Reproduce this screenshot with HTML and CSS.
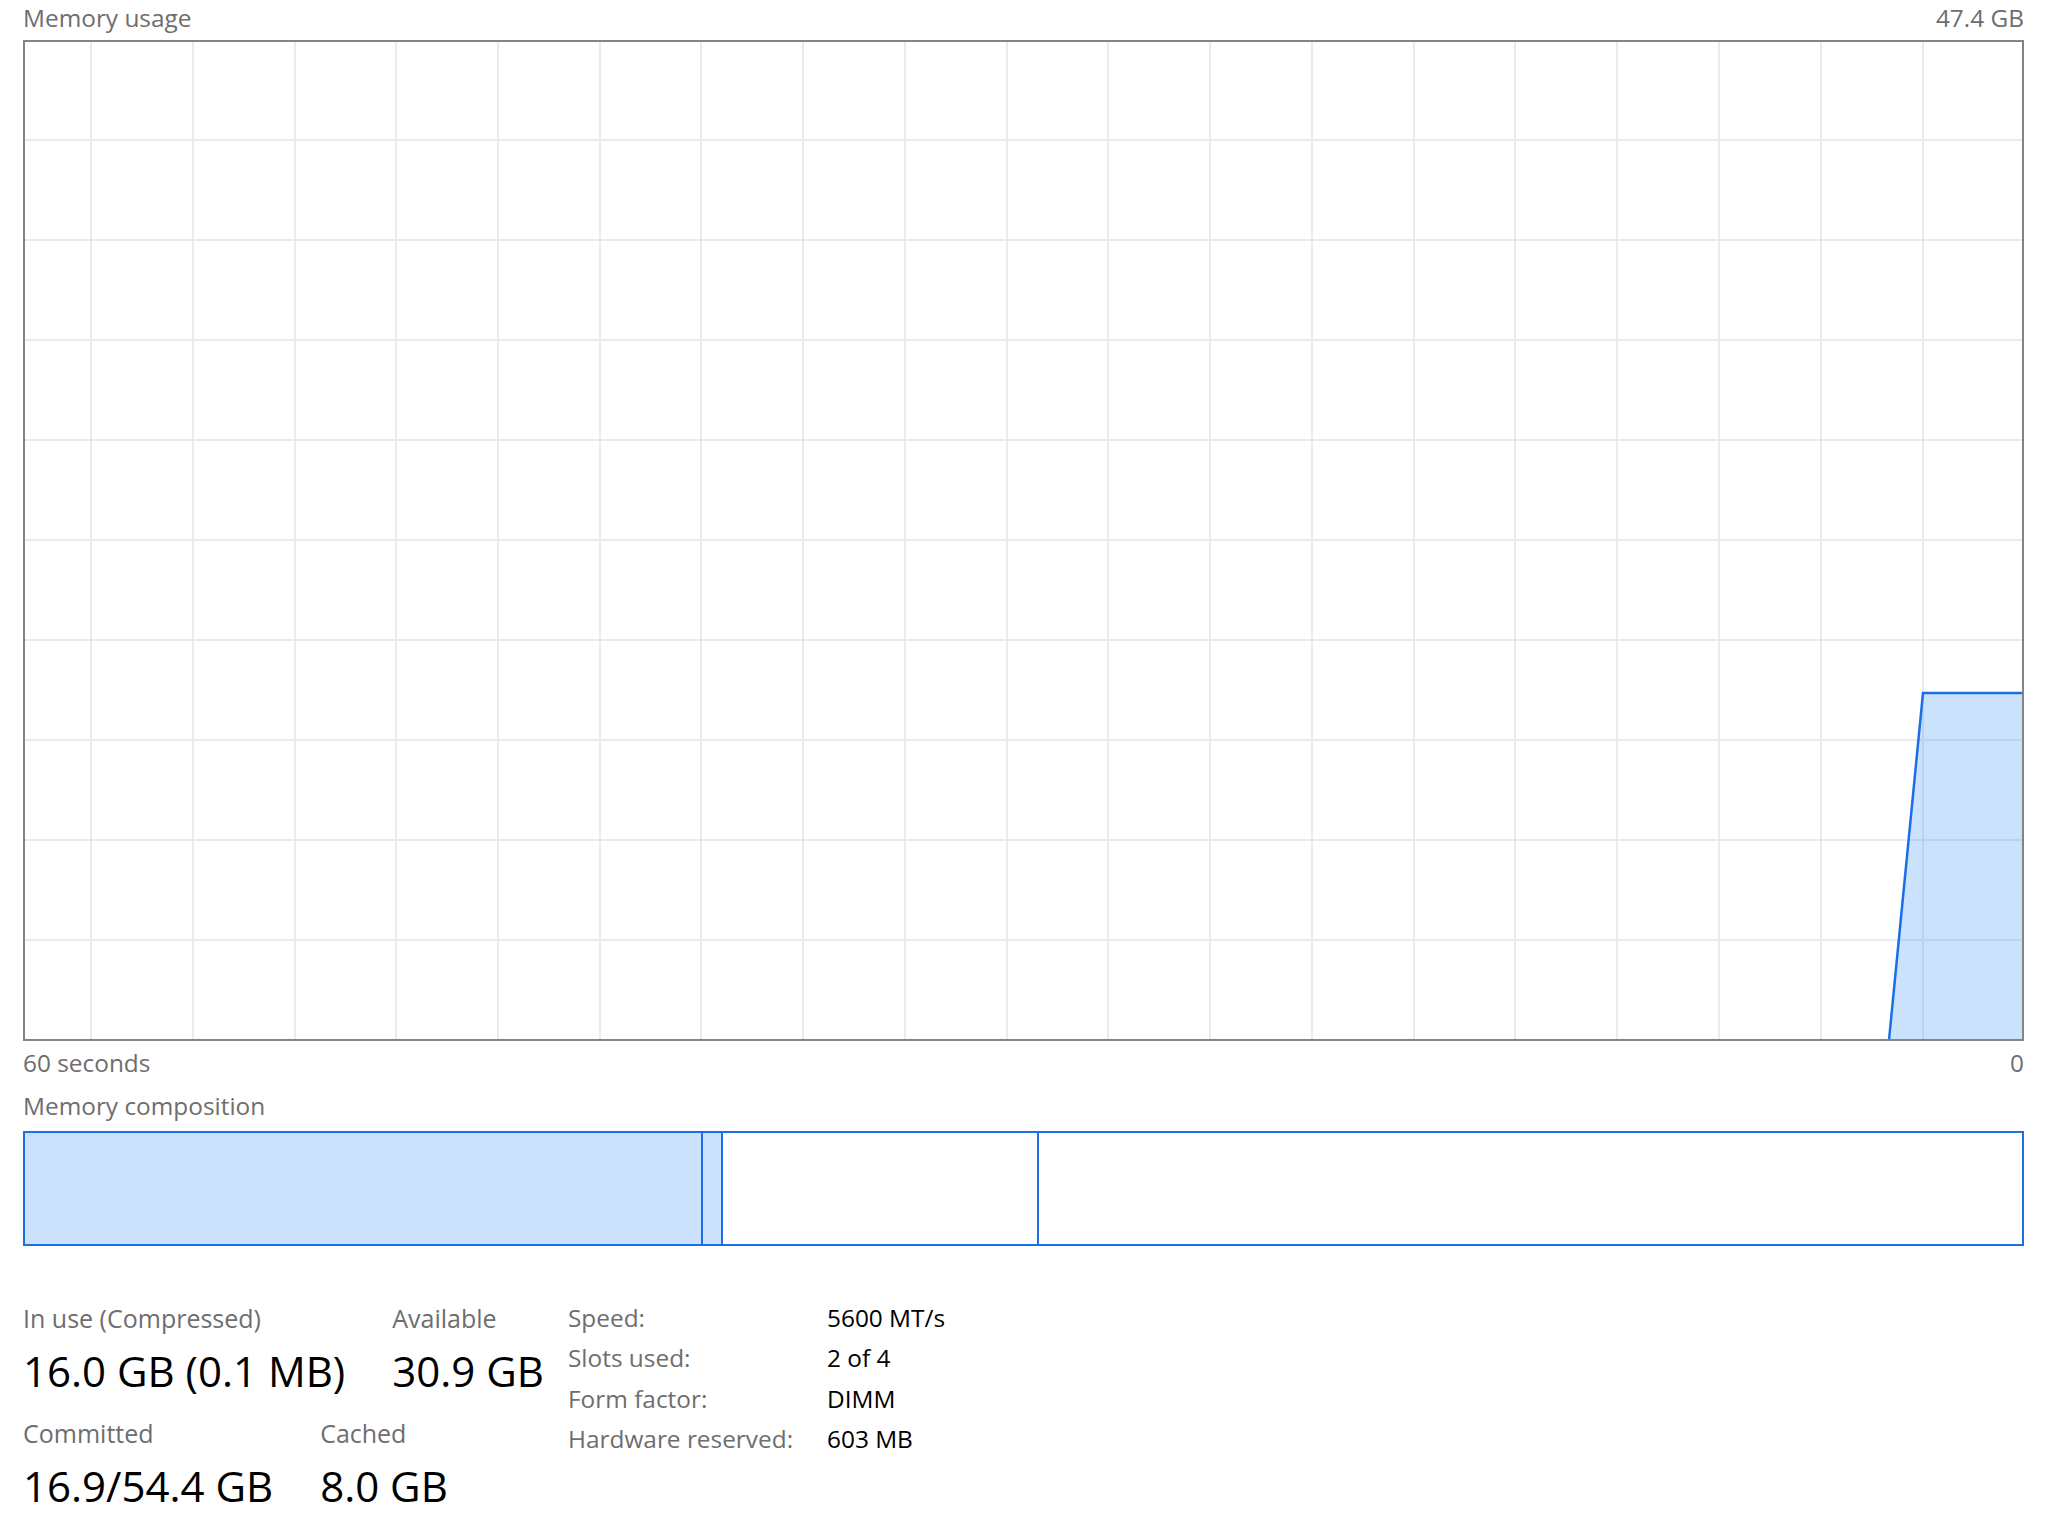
FILE: index.html
```html
<!DOCTYPE html>
<html>
<head>
<meta charset="utf-8">
<title>Memory</title>
<link rel="stylesheet" href="styles.css">
</head>
<body>
<div class="page">
  <div class="head">
    <span class="label">Memory usage</span>
    <span class="label">47.4 GB</span>
  </div>
  <svg class="graph" width="2001" height="1001" viewBox="0 0 2001 1001">
    <g stroke="#ebebeb" stroke-width="2">
      <line x1="2" y1="100" x2="1999" y2="100"/>
      <line x1="2" y1="200" x2="1999" y2="200"/>
      <line x1="2" y1="300" x2="1999" y2="300"/>
      <line x1="2" y1="400" x2="1999" y2="400"/>
      <line x1="2" y1="500" x2="1999" y2="500"/>
      <line x1="2" y1="600" x2="1999" y2="600"/>
      <line x1="2" y1="700" x2="1999" y2="700"/>
      <line x1="2" y1="800" x2="1999" y2="800"/>
      <line x1="2" y1="900" x2="1999" y2="900"/>
      <line x1="68" y1="2" x2="68" y2="999"/>
      <line x1="170" y1="2" x2="170" y2="999"/>
      <line x1="272" y1="2" x2="272" y2="999"/>
      <line x1="373" y1="2" x2="373" y2="999"/>
      <line x1="475" y1="2" x2="475" y2="999"/>
      <line x1="577" y1="2" x2="577" y2="999"/>
      <line x1="678" y1="2" x2="678" y2="999"/>
      <line x1="780" y1="2" x2="780" y2="999"/>
      <line x1="882" y1="2" x2="882" y2="999"/>
      <line x1="984" y1="2" x2="984" y2="999"/>
      <line x1="1085" y1="2" x2="1085" y2="999"/>
      <line x1="1187" y1="2" x2="1187" y2="999"/>
      <line x1="1289" y1="2" x2="1289" y2="999"/>
      <line x1="1391" y1="2" x2="1391" y2="999"/>
      <line x1="1492" y1="2" x2="1492" y2="999"/>
      <line x1="1594" y1="2" x2="1594" y2="999"/>
      <line x1="1696" y1="2" x2="1696" y2="999"/>
      <line x1="1798" y1="2" x2="1798" y2="999"/>
      <line x1="1900" y1="2" x2="1900" y2="999"/>
    </g>
    <polygon points="1866,1000 1900,653 2000,653 2000,1000" fill="#117df5" fill-opacity="0.22"/>
    <polyline points="1866,1000 1900,653 2000,653" fill="none" stroke="#1a6ee8" stroke-width="2.5"/>
    <rect x="1" y="1" width="1999" height="999" fill="none" stroke="#848484" stroke-width="2"/>
  </svg>
  <div class="axis">
    <span class="label">60 seconds</span>
    <span class="label">0</span>
  </div>
  <div class="label comp-title">Memory composition</div>
  <div class="comp">
    <div class="seg filled" style="width:678px"></div>
    <div class="seg filled" style="width:20px"></div>
    <div class="seg" style="width:316px"></div>
    <div class="seg last"></div>
  </div>
  <div class="stats">
    <div class="left">
      <div class="row">
        <div class="stat">
          <div class="label">In use (Compressed)</div>
          <div class="value">16.0 GB (0.1 MB)</div>
        </div>
        <div class="stat">
          <div class="label">Available</div>
          <div class="value">30.9 GB</div>
        </div>
      </div>
      <div class="row">
        <div class="stat">
          <div class="label">Committed</div>
          <div class="value">16.9/54.4 GB</div>
        </div>
        <div class="stat">
          <div class="label">Cached</div>
          <div class="value">8.0 GB</div>
        </div>
      </div>
      <div class="row">
        <div class="stat">
          <div class="label">Paged pool</div>
        </div>
        <div class="stat">
          <div class="label">Non-paged pool</div>
        </div>
      </div>
    </div>
    <div class="table">
      <span class="label">Speed:</span><span class="tval">5600 MT/s</span>
      <span class="label">Slots used:</span><span class="tval">2 of 4</span>
      <span class="label">Form factor:</span><span class="tval">DIMM</span>
      <span class="label">Hardware reserved:</span><span class="tval">603 MB</span>
    </div>
  </div>
</div>
</body>
</html>
```
FILE: styles.css
```css
html, body {
  margin: 0;
  padding: 0;
  background: #ffffff;
}
body {
  width: 2048px;
  height: 1536px;
  overflow: hidden;
  font-family: "Open Sans", "Noto Sans", sans-serif;
}
.page {
  padding: 0 24px 0 23px;
}
.label {
  font-size: 24.4px;
  line-height: 33px;
  color: #6e6e6e;
  white-space: nowrap;
}
.head {
  display: flex;
  justify-content: space-between;
  height: 40px;
  padding-top: 1px;
  box-sizing: border-box;
}
.graph {
  display: block;
}
.axis {
  display: flex;
  justify-content: space-between;
  margin-top: 5px;
}
.comp-title {
  margin-top: 10px;
}
.comp {
  margin-top: 9px;
  height: 115px;
  box-sizing: border-box;
  border: 2px solid #1d6fe8;
  display: flex;
}
.seg {
  box-sizing: border-box;
  border-right: 2px solid #1d6fe8;
  flex: none;
}
.seg.filled {
  background: #cbe1fc;
}
.seg.last {
  flex: 1;
  border-right: none;
}
.stats {
  display: flex;
  margin-top: 52px;
}
.left {
  width: 545px;
  flex: none;
  padding-top: 4px;
}
.row {
  display: flex;
  gap: 47px;
  margin-bottom: 11px;
}
.stat .label {
  font-size: 25px;
}
.value {
  font-size: 42px;
  line-height: 71px;
  color: #000000;
  white-space: nowrap;
}
.table {
  display: grid;
  grid-template-columns: 259px auto;
  grid-auto-rows: 40.3px;
  align-content: start;
}
.table .label {
  line-height: 40.3px;
}
.tval {
  font-size: 24.4px;
  line-height: 40.3px;
  color: #000000;
  white-space: nowrap;
}
```
